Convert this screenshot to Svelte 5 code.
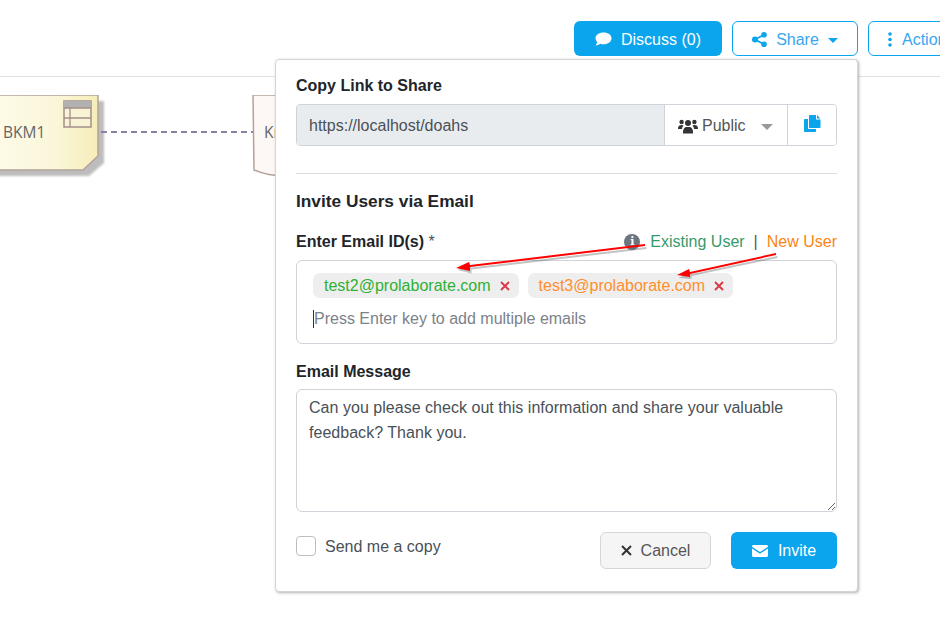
<script>
	const emails = [
		{ address: 'test2@prolaborate.com', kind: 'existing' },
		{ address: 'test3@prolaborate.com', kind: 'new' }
	];
	const message = 'Can you please check out this information and share your valuable feedback? Thank you.';
</script>

<div class="page">
	<header class="toolbar">
		<button class="btn solid discuss">
			<svg width="17" height="15" viewBox="0 0 17 15"><path fill="#fff" d="M8.500 0.500C3.900 0.500 0.500 3 0.500 6.300c0 1.500.7 2.800 1.800 3.800-.3 1.400-1.300 2.700-1.800 3.400 1.700-.1 3.500-.9 4.600-1.800 1.100.4 2.200.6 3.400.6 4.600 0 8-2.600 8-6S13.100.5 8.500.5z"/></svg>
			Discuss (0)
		</button>
		<button class="btn outline share">
			<svg width="15" height="15" viewBox="0 0 15 15"><g fill="#0ba5ee"><circle cx="3" cy="7.500" r="3"/><circle cx="12" cy="2.800" r="2.800"/><circle cx="12" cy="12.200" r="2.800"/></g><path stroke="#0ba5ee" stroke-width="1.800" d="M3 7.500L12 2.800M3 7.500L12 12.200"/></svg>
			Share
			<span class="caret"></span>
		</button>
		<button class="btn outline actions">
			<svg width="4" height="15" viewBox="0 0 4 15"><g fill="#0ba5ee"><circle cx="2" cy="2" r="1.800"/><circle cx="2" cy="7.500" r="1.800"/><circle cx="2" cy="13" r="1.800"/></g></svg>
			Actions
		</button>
	</header>

	<!-- diagram behind the popover -->
	<svg class="diagram" width="300" height="120" viewBox="0 0 300 120">
		<defs>
			<linearGradient id="bkm" x1="0" x2="1" y1="0" y2="0">
				<stop offset="0" stop-color="#fdfbe8" />
				<stop offset="0.6" stop-color="#faf6d9" />
				<stop offset="1" stop-color="#f6edb8" />
			</linearGradient>
			<filter id="soft"><feGaussianBlur stdDeviation="0.8" /></filter>
		</defs>
		<path d="M-4 6H104V68L89 81H-4z" fill="#bdbdbd" filter="url(#soft)" />
		<path d="M-4 0H98V61L83 75H-4z" fill="url(#bkm)" stroke="#b3a29c" stroke-width="1.500" />
		<rect x="64" y="6" width="27" height="26" fill="#f8f3d5" stroke="#a48f8b" stroke-width="1.500" />
		<rect x="64" y="6" width="27" height="7" fill="#b1b1b1" />
		<path d="M64 13H91M64 23H91M70 13V32" stroke="#a48f8b" stroke-width="1.300" fill="none" />
		<text x="3" y="43" class="node-label">BKM1</text>
		<path d="M101 37H253" stroke="#8585a3" stroke-width="1.800" stroke-dasharray="6 4" />
		<path d="M253 0H285V81Q268 81 254 75z" fill="#fdf8f5" stroke="#b3a29c" stroke-width="1.500" />
		<text x="264" y="43" class="node-label">Kn</text>
	</svg>

	<section class="popover">
		<h3>Copy Link to Share</h3>
		<div class="link-row">
			<div class="link-value">https://localhost/doahs</div>
			<div class="link-access">
				<svg width="20" height="15" viewBox="0 0 20 15"><g fill="#333"><circle cx="3.600" cy="3" r="2.200"/><circle cx="16.400" cy="3" r="2.200"/><circle cx="10" cy="4" r="3"/><path d="M0 9.500C0 7 1.500 6 3.500 6c1 0 1.600.3 2 .7-1 .9-1.500 2-1.500 3.300H0zM20 9.500C20 7 18.500 6 16.500 6c-1 0-1.600.3-2 .7 1 .9 1.500 2 1.500 3.300h4zM5 13c0-3 1.500-5 3.500-5h3c2 0 3.500 2 3.500 5v1.500H5z"/></g></svg>
				<span>Public</span>
				<span class="caret grey"></span>
			</div>
			<button class="copy-btn" aria-label="Copy link">
				<svg width="17" height="17" viewBox="0 0 17 17"><path fill="#0ba5ee" d="M6 0h6v4.500h4.500V12c0 .6-.4 1-1 1H6c-.6 0-1-.4-1-1V1c0-.6.4-1 1-1zM13 0l3.500 3.500H13zM1 4h3v9c0 .6.400 1 1 1h7v2c0 .6-.4 1-1 1H1c-.6 0-1-.4-1-1V5c0-.6.400-1 1-1z"/></svg>
			</button>
		</div>

		<hr />

		<h3 class="invite-title">Invite Users via Email</h3>

		<div class="label-row">
			<label for="emails">Enter Email ID(s) <span class="required">*</span></label>
			<div class="legend">
				<span class="info">i</span>
				<span class="existing">Existing User</span>
				<span class="sep">|</span>
				<span class="new">New User</span>
			</div>
		</div>
		<div class="email-box">
			<div class="chips">
				{#each emails as email}
					<span class="chip {email.kind}">
						{email.address}
						<svg class="remove" width="10" height="10" viewBox="0 0 10 10"><path d="M1 1L9 9M9 1L1 9" stroke="#dc3545" stroke-width="1.800" /></svg>
					</span>
				{/each}
			</div>
			<input id="emails" placeholder="Press Enter key to add multiple emails" />
			<span class="text-cursor"></span>
		</div>

		<label class="message-label" for="message">Email Message</label>
		<textarea id="message" value={message}></textarea>

		<div class="footer">
			<label class="copy-check">
				<span class="checkbox"></span>
				<span class="copy-text">Send me a copy</span>
			</label>
			<div class="footer-buttons">
				<button class="btn cancel">
					<svg width="11" height="11" viewBox="0 0 11 11"><path d="M1 1L10 10M10 1L1 10" stroke="#333" stroke-width="2" /></svg>
					Cancel
				</button>
				<button class="btn solid invite">
					<svg width="16" height="12" viewBox="0 0 16 12"><path fill="#fff" d="M1.500 0h13c.8 0 1.500.7 1.500 1.500v.3L8 7 0 1.800v-.3C0 .7.700 0 1.500 0zM0 3.500L8 8.700l8-5.200v7c0 .8-.7 1.500-1.500 1.500h-13C.7 12 0 11.300 0 10.500z"/></svg>
					Invite
				</button>
			</div>
		</div>
	</section>

	<!-- annotation arrows drawn on top of the screenshot -->
	<svg class="arrows" width="940" height="629" viewBox="0 0 940 629">
		<g fill="#555" opacity="0.35" transform="translate(1.500 2)">
			<path d="M645 245L470 265.500L469 263L456 268L470 271.500L470 267.500L645 247z" />
			<path d="M776 254L690 272L689 270L677 276L690 277L690 274L776 256z" />
		</g>
		<g fill="#ff0000">
			<path d="M645 244L470 265L469 262L456 268L470 271L470 267L645 246z" />
			<path d="M776 253L690 272L689 269L677 275L690 277L690 274L776 255z" />
		</g>
	</svg>
</div>

<style>
	:global(body) {
		margin: 0;
		background: #fff;
	}

	.page {
		position: relative;
		width: 940px;
		height: 629px;
		overflow: hidden;
		font-family: 'Liberation Sans', Arial, sans-serif;
		font-size: 16px;
		color: #212529;
	}

	.toolbar {
		display: flex;
		gap: 10px;
		box-sizing: border-box;
		height: 77px;
		padding: 21px 0 0 574px;
		border-bottom: 1px solid #dee2e6;
	}

	.btn {
		display: inline-flex;
		align-items: center;
		justify-content: center;
		box-sizing: border-box;
		flex-shrink: 0;
		height: 35px;
		padding: 0;
		border: 1px solid transparent;
		border-radius: 6px;
		font-family: inherit;
		font-size: 16px;
	}

	.toolbar .btn {
		padding-top: 2px;
	}

	.solid {
		background: #0ba5ee;
		color: #fff;
	}

	.outline {
		background: #fff;
		border-color: #0ba5ee;
		color: #3aa6ee;
	}

	.discuss {
		width: 148px;
		gap: 9px;
	}

	.share {
		width: 126px;
		gap: 9px;
	}

	.toolbar .actions {
		width: 110px;
		gap: 10px;
		justify-content: flex-start;
		padding-left: 19px;
	}

	.caret {
		display: inline-block;
		border-top: 5px solid #0ba5ee;
		border-left: 5px solid transparent;
		border-right: 5px solid transparent;
		margin-top: 2px;
	}

	.caret.grey {
		border-top: 6px solid #999;
		border-left: 6px solid transparent;
		border-right: 6px solid transparent;
		margin-left: 11px;
	}

	.diagram {
		position: absolute;
		left: 0;
		top: 95px;
	}

	.node-label {
		font-family: 'Open Sans', sans-serif;
		font-size: 15.5px;
		fill: #666;
	}

	.popover {
		position: absolute;
		left: 275px;
		top: 59px;
		box-sizing: border-box;
		width: 583px;
		height: 533px;
		padding: 16px 20px 0;
		background: #fff;
		border: 1px solid #d4d4d4;
		border-radius: 4px;
		box-shadow: 1px 1px 3px rgba(0, 0, 0, 0.3);
	}

	h3 {
		margin: 0;
		font-size: 16px;
		line-height: 19px;
		font-weight: bold;
		color: #212529;
	}

	.link-row {
		display: flex;
		height: 42px;
		margin-top: 9px;
		border: 1px solid #ced4da;
		border-radius: 4px;
		box-sizing: border-box;
	}

	.link-value {
		flex: 1;
		display: flex;
		align-items: center;
		padding: 2px 0 0 12px;
		background: #e9ecef;
		color: #495057;
		border-radius: 3px 0 0 3px;
	}

	.link-access {
		display: flex;
		align-items: center;
		gap: 4px;
		width: 123px;
		box-sizing: border-box;
		padding: 2px 0 0 13px;
		border-left: 1px solid #ced4da;
		color: #555;
	}

	.copy-btn {
		display: flex;
		align-items: center;
		justify-content: center;
		width: 49px;
		padding: 0 0 3px;
		background: #fff;
		border: 0;
		border-left: 1px solid #ced4da;
		border-radius: 0 3px 3px 0;
	}

	hr {
		margin: 27px 0 0;
		border: 0;
		border-top: 1px solid #dcdfe2;
	}

	h3.invite-title {
		margin-top: 18px;
		font-size: 17.3px;
	}

	.label-row {
		display: flex;
		justify-content: space-between;
		align-items: center;
		height: 19px;
		margin-top: 21px;
	}

	label[for='emails'],
	.message-label {
		font-weight: bold;
		font-size: 16px;
		color: #212529;
	}

	.required {
		font-weight: normal;
		color: #495057;
	}

	.legend {
		display: flex;
		align-items: center;
		color: #555;
	}

	.info {
		display: flex;
		align-items: center;
		justify-content: center;
		width: 16px;
		height: 16px;
		margin-right: 10px;
		border-radius: 50%;
		background: #6c757d;
		color: #fff;
		font: bold 11px 'DejaVu Serif', serif;
	}

	.existing {
		color: #38996b;
	}

	.sep {
		margin: 0 9px;
	}

	.new {
		color: #fd8512;
	}

	.email-box {
		position: relative;
		box-sizing: border-box;
		height: 84px;
		margin-top: 9px;
		padding: 12px 17px 0;
		border: 1px solid #ced4da;
		border-radius: 6px;
	}

	.chips {
		display: flex;
		gap: 9px;
		margin-left: -1px;
	}

	.chip {
		display: inline-flex;
		align-items: center;
		gap: 9px;
		box-sizing: border-box;
		height: 25px;
		padding: 0 9px 0 11px;
		background: #eeeeee;
		border-radius: 7px;
	}

	.chip.existing {
		color: #2eb135;
	}

	.chip.new {
		color: #ff8f2e;
	}

	.remove {
		margin-top: 1px;
	}

	input {
		display: block;
		box-sizing: border-box;
		width: 100%;
		height: 24px;
		margin-top: 9px;
		padding: 0;
		border: 0;
		outline: 0;
		font-family: inherit;
		font-size: 16px;
	}

	input::placeholder {
		color: #7b8289;
		opacity: 1;
	}

	.text-cursor {
		position: absolute;
		left: 16px;
		top: 49px;
		width: 1px;
		height: 18px;
		background: #333;
	}

	.message-label {
		display: block;
		margin-top: 18px;
		line-height: 19px;
	}

	textarea {
		display: block;
		box-sizing: border-box;
		width: 100%;
		height: 123px;
		margin-top: 8px;
		padding: 5px 12px;
		border: 1px solid #ced4da;
		border-radius: 6px;
		font-family: inherit;
		font-size: 16px;
		letter-spacing: 0.03px;
		line-height: 25px;
		color: #495057;
		outline: 0;
	}

	.footer {
		display: flex;
		justify-content: space-between;
		align-items: flex-start;
		margin-top: 20px;
	}

	.copy-check {
		display: flex;
		align-items: center;
		gap: 9px;
		margin-top: 4px;
		color: #495057;
	}

	.copy-text {
		padding-top: 2px;
	}

	.checkbox {
		width: 18px;
		height: 18px;
		border: 1px solid #bdbdbd;
		border-radius: 4px;
	}

	.footer-buttons {
		display: flex;
		gap: 20px;
	}

	.cancel {
		width: 111px;
		height: 37px;
		gap: 9px;
		background: #f5f5f5;
		border-color: #d3d7db;
		color: #555;
	}

	.invite {
		width: 106px;
		height: 37px;
		gap: 10px;
	}

	.arrows {
		position: absolute;
		left: 0;
		top: 0;
		pointer-events: none;
	}
</style>
